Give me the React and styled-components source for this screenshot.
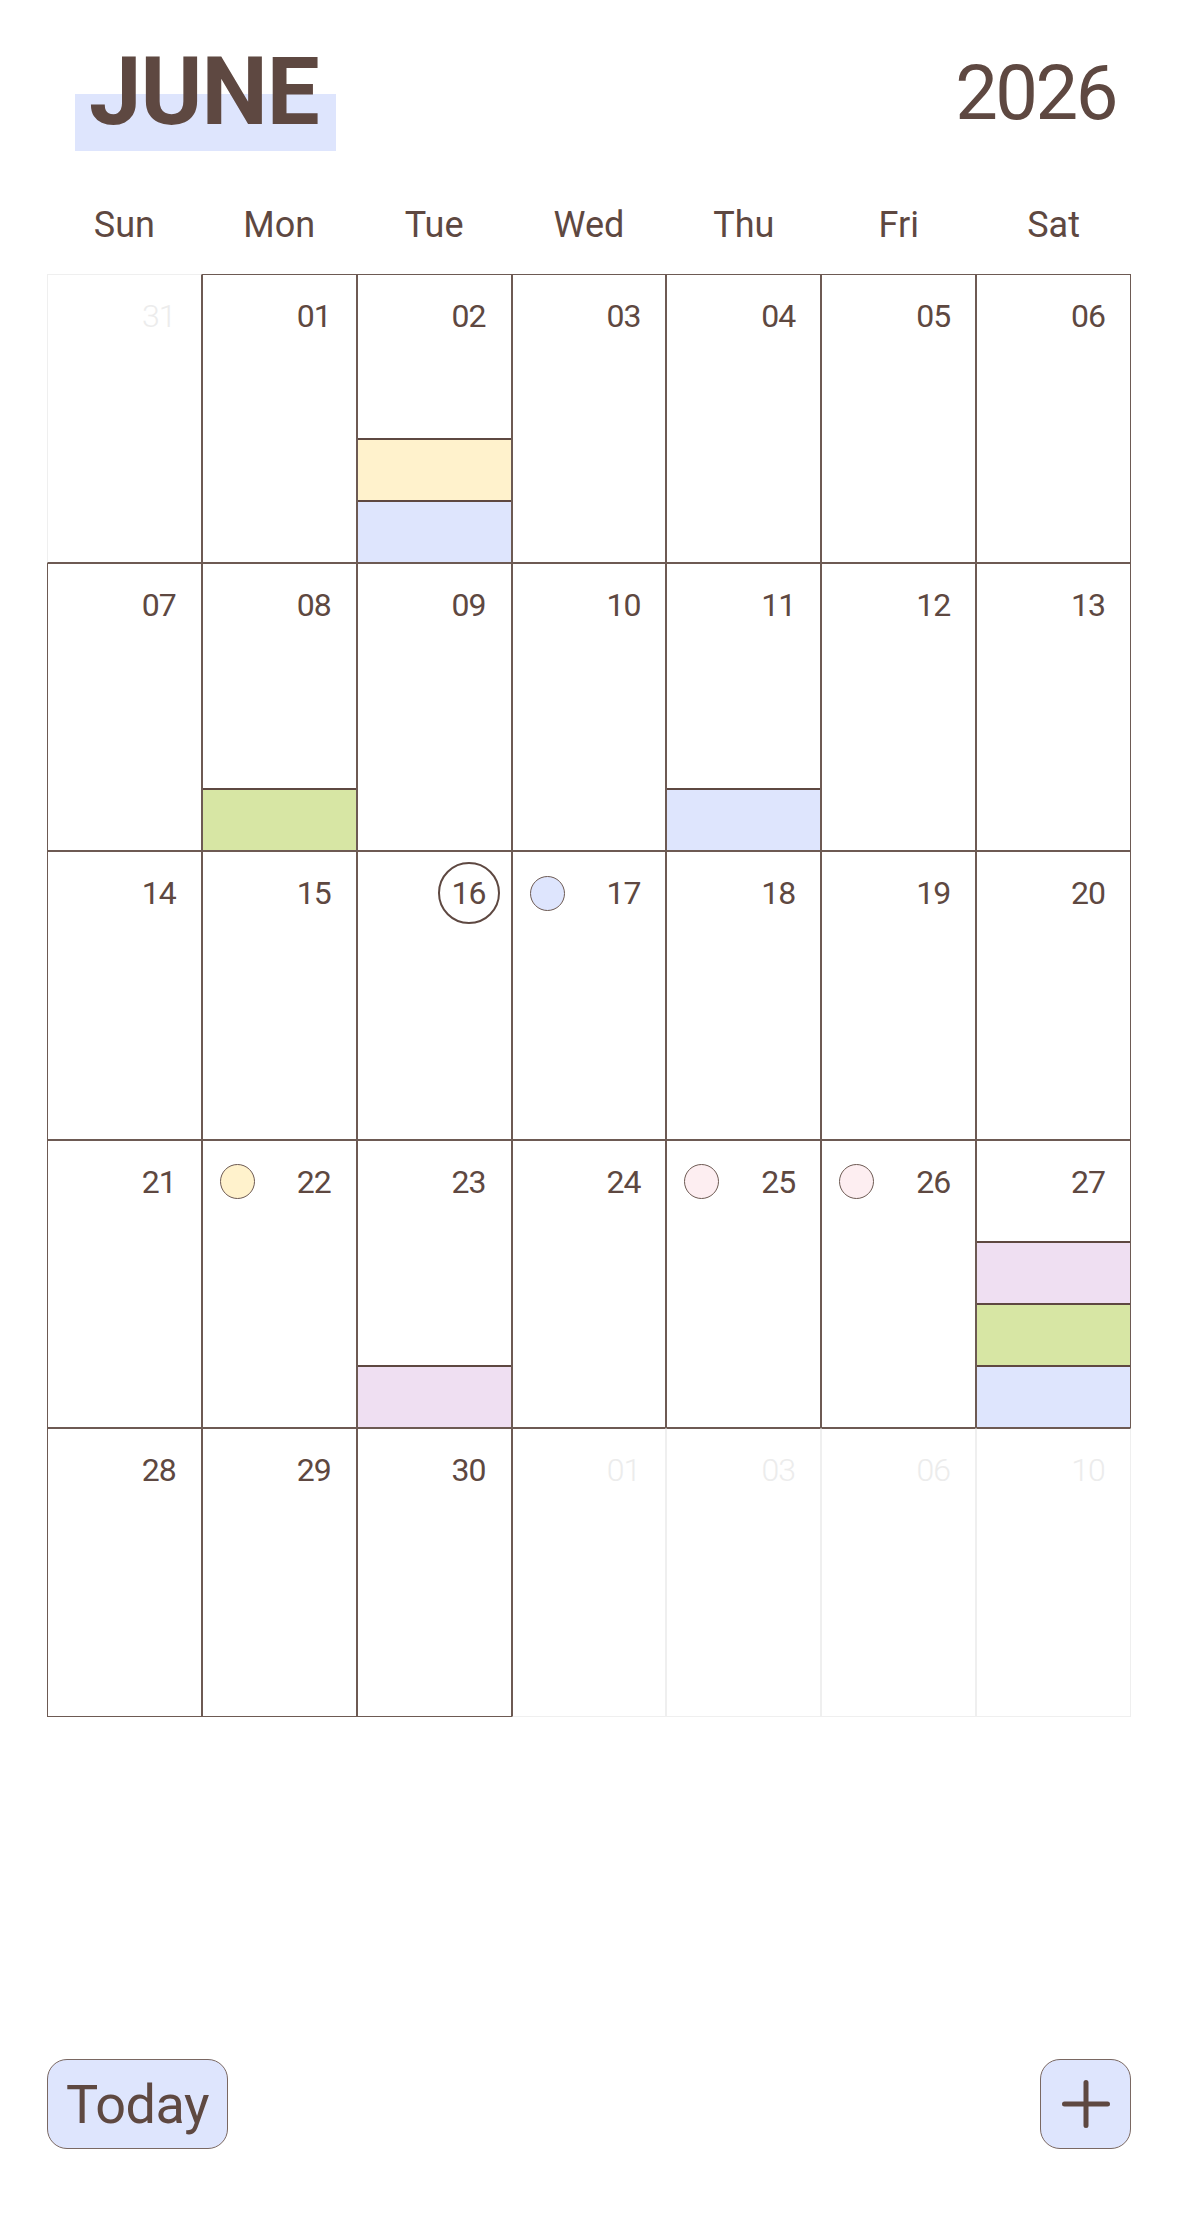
import React from 'react'
import styled, { createGlobalStyle } from 'styled-components'

const INK = '#5e4841'
const LINE = '#6d5a53'
const FAINT = '#ececec'
const FAINT_LINE = '#efefef'

const COLORS = {
  blue: '#dee5fd',
  yellow: '#fff2cc',
  green: '#d7e6a4',
  lilac: '#efdff2',
  rose: '#fdeef1',
}

const GlobalStyle = createGlobalStyle`
  html, body {
    margin: 0;
    padding: 0;
    background: #ffffff;
  }
  body {
    font-family: 'Roboto', 'Inter', sans-serif;
    color: ${INK};
  }
  * { box-sizing: border-box; }
`

const WEEKDAYS = ['Sun', 'Mon', 'Tue', 'Wed', 'Thu', 'Fri', 'Sat']

// one entry per cell, leading / trailing days are out of month
const days = [
  { label: '31', out: true },
  { label: '01' },
  { label: '02', events: ['yellow', 'blue'] },
  { label: '03' },
  { label: '04' },
  { label: '05' },
  { label: '06' },
  { label: '07' },
  { label: '08', events: ['green'] },
  { label: '09' },
  { label: '10' },
  { label: '11', events: ['blue'] },
  { label: '12' },
  { label: '13' },
  { label: '14' },
  { label: '15' },
  { label: '16', today: true },
  { label: '17', dot: 'blue' },
  { label: '18' },
  { label: '19' },
  { label: '20' },
  { label: '21' },
  { label: '22', dot: 'yellow' },
  { label: '23', events: ['lilac'] },
  { label: '24' },
  { label: '25', dot: 'rose' },
  { label: '26', dot: 'rose' },
  { label: '27', events: ['lilac', 'green', 'blue'] },
  { label: '28' },
  { label: '29' },
  { label: '30' },
  { label: '01', out: true },
  { label: '03', out: true },
  { label: '06', out: true },
  { label: '10', out: true },
]

// an out-of-month cell takes the dark line on any side that touches a month day
const isIn = (i) => i >= 0 && i < days.length && !days[i].out
const edgesFor = (i) => {
  const col = i % 7
  return {
    top: isIn(i - 7),
    bottom: isIn(i + 7),
    left: col > 0 && isIn(i - 1),
    right: col < 6 && isIn(i + 1),
  }
}

export default function App() {
  return (
    <>
      <GlobalStyle />
      <Page>
        <TitleRow>
          <Month>JUNE</Month>
          <Year>2026</Year>
        </TitleRow>

        <Weekdays>
          {WEEKDAYS.map((d) => (
            <Weekday key={d}>{d}</Weekday>
          ))}
        </Weekdays>

        <MonthGrid>
          {days.map((day, i) => (
            <Cell key={i} $out={day.out} $edges={edgesFor(i)}>
              <DayHead>
                {day.dot && <Dot $color={COLORS[day.dot]} />}
                <DayNumber $out={day.out} $today={day.today}>
                  {day.label}
                </DayNumber>
              </DayHead>
              {day.events && (
                <Events>
                  {day.events.map((ev, j) => (
                    <EventBar key={j} $color={COLORS[ev]} />
                  ))}
                </Events>
              )}
            </Cell>
          ))}
        </MonthGrid>

        <Footer>
          <TodayButton>Today</TodayButton>
          <AddButton aria-label="Add">
            <svg width="48" height="48" viewBox="0 0 48 48" fill="none">
              <path
                d="M24 2.5v43M2.5 24h43"
                stroke={INK}
                strokeWidth="5"
                strokeLinecap="round"
              />
            </svg>
          </AddButton>
        </Footer>
      </Page>
    </>
  )
}

const Page = styled.div`
  min-height: 100vh;
  display: flex;
  flex-direction: column;
  padding: 45px 47px 69px;
`

const TitleRow = styled.header`
  display: flex;
  justify-content: space-between;
  align-items: flex-start;
  padding: 0 15px 0 28px;
`

const Month = styled.h1`
  margin: 0;
  padding: 0 17px 12px 14px;
  font-family: 'Roboto', sans-serif;
  font-weight: 700;
  font-size: 94px;
  line-height: 94px;
  letter-spacing: -1px;
  color: ${INK};
  background: linear-gradient(to bottom, transparent 49px, ${COLORS.blue} 49px);
`

const Year = styled.div`
  margin-top: 10px;
  font-family: 'Roboto', sans-serif;
  font-weight: 400;
  font-size: 76px;
  line-height: 76px;
  letter-spacing: -2.5px;
`

const Weekdays = styled.div`
  display: grid;
  grid-template-columns: repeat(7, 1fr);
  margin-top: 56px;
`

const Weekday = styled.div`
  text-align: center;
  font-size: 36px;
  line-height: 36px;
  color: ${INK};
`

const MonthGrid = styled.div`
  display: grid;
  grid-template-columns: repeat(7, 1fr);
  grid-auto-rows: 288.6px;
  margin-top: 31px;
`

const side = (p, key) => (!p.$out || p.$edges[key] ? LINE : FAINT_LINE)

const Cell = styled.div`
  display: flex;
  flex-direction: column;
  min-width: 0;
  border-style: solid;
  border-width: 1px;
  border-top-color: ${(p) => side(p, 'top')};
  border-bottom-color: ${(p) => side(p, 'bottom')};
  border-left-color: ${(p) => side(p, 'left')};
  border-right-color: ${(p) => side(p, 'right')};
`

const DayHead = styled.div`
  display: flex;
  align-items: center;
  padding: 10px 11px 0 17px;
`

const Dot = styled.span`
  width: 35px;
  height: 35px;
  border-radius: 50%;
  background: ${(p) => p.$color};
  border: 1.5px solid ${LINE};
`

const DayNumber = styled.span`
  margin-left: auto;
  width: 62px;
  height: 62px;
  display: flex;
  align-items: center;
  justify-content: center;
  border-radius: 50%;
  border: 2px solid ${(p) => (p.$today ? INK : 'transparent')};
  font-size: 32px;
  font-weight: ${(p) => (p.$out ? 300 : 400)};
  letter-spacing: -1px;
  color: ${(p) => (p.$out ? FAINT : INK)};
`

const Events = styled.div`
  margin-top: auto;
  display: flex;
  flex-direction: column;
`

const EventBar = styled.div`
  height: 62px;
  background: ${(p) => p.$color};
  border-top: 2px solid ${INK};
`

const Footer = styled.footer`
  margin-top: auto;
  display: flex;
  justify-content: space-between;
  align-items: center;
`

const BaseButton = styled.button`
  height: 90px;
  border-radius: 20px;
  border: 1.5px solid #7a6862;
  background: ${COLORS.blue};
  color: ${INK};
  display: flex;
  align-items: center;
  justify-content: center;
  cursor: pointer;
  padding: 0;
`

const TodayButton = styled(BaseButton)`
  width: 181px;
  font-family: 'Roboto', sans-serif;
  font-size: 54px;
  letter-spacing: -0.5px;
`

const AddButton = styled(BaseButton)`
  width: 91px;
`
